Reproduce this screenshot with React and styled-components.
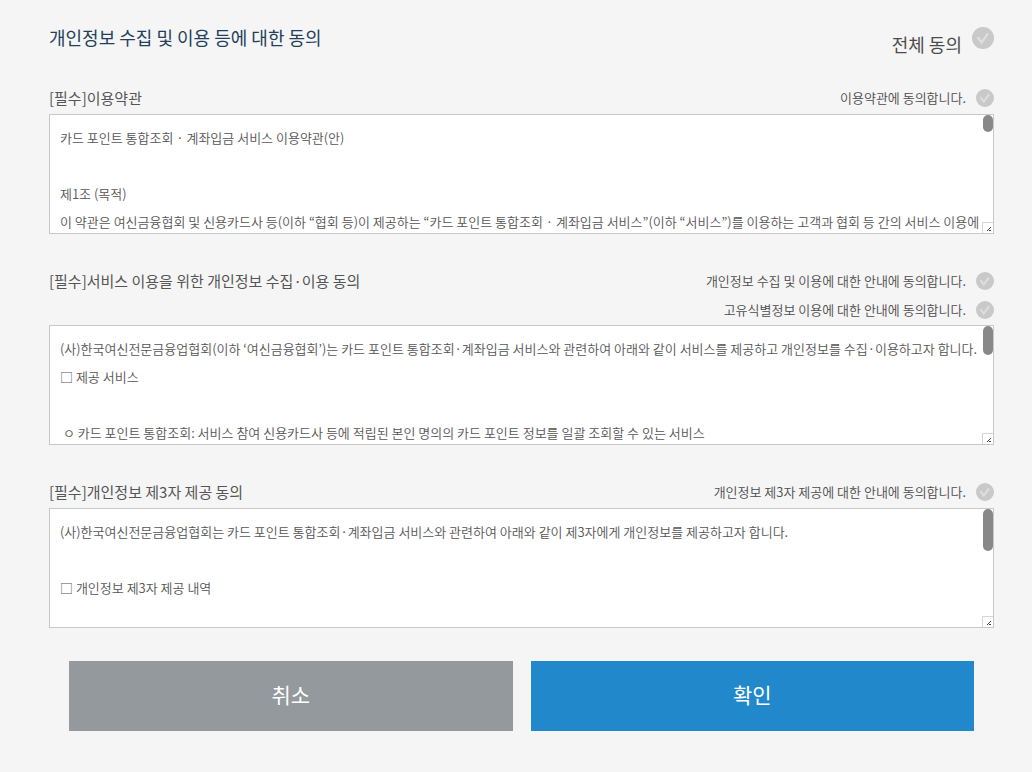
import React, { useState } from "react";
import styled, { createGlobalStyle } from "styled-components";

const GlobalStyle = createGlobalStyle`
  * { box-sizing: border-box; }
  body {
    margin: 0;
    background: #f5f5f5;
    color: #555;
    font-family: "Noto Sans CJK KR", "Noto Sans", sans-serif;
    font-size: 13px;
  }
`;

const Page = styled.form`
  padding: 24px 38px 40px 49px;
`;

const PageHeader = styled.header`
  display: flex;
  justify-content: space-between;
  align-items: flex-start;
  height: 59px;
`;

const Title = styled.h1`
  margin: 0;
  font-size: 18px;
  line-height: 26px;
  font-weight: 400;
  color: #243f5c;
`;

const Section = styled.section`
  margin-bottom: 32px;
`;

const SectionHeader = styled.div`
  display: flex;
  justify-content: space-between;
  align-items: flex-start;
  min-height: 31px;
  padding-bottom: 1px;
`;

const SectionTitle = styled.h2`
  margin: 0;
  font-size: 15px;
  line-height: 29px;
  font-weight: 400;
`;

const Consents = styled.div`
  display: flex;
  flex-direction: column;
  align-items: flex-end;
`;

const ConsentLabel = styled.label`
  display: flex;
  align-items: ${(p) => (p.$large ? "flex-start" : "center")};
  gap: 10px;
  padding-top: ${(p) => (p.$large ? "3px" : "0")};
  font-size: ${(p) => (p.$large ? "18px" : "13px")};
  line-height: ${(p) => (p.$large ? "34px" : "29px")};
  font-weight: ${(p) => (p.$large ? 400 : 350)};
  color: #4c4c4c;
  cursor: pointer;
`;

const CheckWrap = styled.span`
  display: grid;
  width: ${(p) => (p.$large ? "22px" : "18px")};
  height: ${(p) => (p.$large ? "22px" : "18px")};

  > * { grid-area: 1 / 1; }
`;

const CheckInput = styled.input`
  appearance: none;
  width: 100%;
  height: 100%;
  margin: 0;
  border-radius: 50%;
  background: #c9c9c9;
  cursor: pointer;

  &:checked { background: #2188cb; }
`;

const CheckMark = styled.svg`
  width: 100%;
  height: 100%;
  pointer-events: none;
`;

const TermsFrame = styled.div`
  position: relative;
  border: 1px solid #c8c8c8;
  background: #fff;
`;

const TermsText = styled.textarea`
  display: block;
  width: 100%;
  height: 118px;
  margin: 0;
  padding: 9px 10px 0;
  border: 0;
  outline: 0;
  background: transparent;
  color: #555;
  font-family: inherit;
  font-size: 13px;
  font-weight: 350;
  line-height: 28px;
  resize: none;
  scrollbar-width: none;
`;

const ScrollThumb = styled.span`
  position: absolute;
  top: 0;
  right: 0;
  width: 10px;
  height: ${(p) => p.$size}px;
  border-radius: 5px;
  background: #888;
  pointer-events: none;
`;

const Grip = styled.svg`
  position: absolute;
  right: 0;
  bottom: 0;
  width: 11px;
  height: 11px;
  pointer-events: none;
`;

const Actions = styled.div`
  display: grid;
  grid-template-columns: 1fr 1fr;
  gap: 18px;
  padding: 1px 20px 0;
`;

const ActionButton = styled.button`
  height: 70px;
  border: 0;
  padding: 0 0 4px;
  background: ${(p) => (p.$primary ? "#2188cb" : "#94999d")};
  color: #fff;
  font-family: inherit;
  font-size: 21px;
  font-weight: 400;
  cursor: pointer;
`;

function Consent({ children, large }) {
  return (
    <ConsentLabel $large={large}>
      {children}
      <CheckWrap $large={large}>
        <CheckInput type="checkbox" />
        <CheckMark viewBox="0 0 22 22" fill="none" stroke="#dedede" strokeWidth="2.4" aria-hidden="true">
          <path d="M5.5 10 L9.5 15.5 L16 6.5" />
        </CheckMark>
      </CheckWrap>
    </ConsentLabel>
  );
}

const TRACK_HEIGHT = 107;

function Terms({ labelledBy, text, thumb }) {
  const [progress, setProgress] = useState(0);
  const onScroll = (e) => {
    const el = e.currentTarget;
    setProgress(el.scrollTop / Math.max(1, el.scrollHeight - el.clientHeight));
  };
  return (
    <TermsFrame>
      <TermsText aria-labelledby={labelledBy} readOnly value={text} onScroll={onScroll} />
      <ScrollThumb $size={thumb} style={{ top: progress * (TRACK_HEIGHT - thumb) }} />
      <Grip viewBox="0 0 11 11" fill="none" aria-hidden="true">
        <path d="M0 0H11V11H0z" fill="#fff" />
        <path d="M0.5 11 V0.5 H11" stroke="#d4d4d4" />
        <path d="M5 8h1v1h-1z M6 7h1v1h-1z M7 6h1v1h-1z M8 5h1v1h-1z M8 8h1v1h-1z M7 9h1v-1h-1z" fill="#444" />
      </Grip>
    </TermsFrame>
  );
}

const sections = [
  {
    id: "terms",
    title: "[필수]이용약관",
    consents: ["이용약관에 동의합니다."],
    thumb: 17,
    text: `카드 포인트 통합조회 · 계좌입금 서비스 이용약관(안)

제1조 (목적)
이 약관은 여신금융협회 및 신용카드사 등(이하 “협회 등)이 제공하는 “카드 포인트 통합조회 · 계좌입금 서비스”(이하 “서비스”)를 이용하는 고객과 협회 등 간의 서비스 이용에 관한 제반 사항을 정함을 목적으로 합니다.
${"\n".repeat(24)}`,
  },
  {
    id: "privacy",
    title: "[필수]서비스 이용을 위한 개인정보 수집·이용 동의",
    consents: ["개인정보 수집 및 이용에 대한 안내에 동의합니다.", "고유식별정보 이용에 대한 안내에 동의합니다."],
    thumb: 29,
    text: `(사)한국여신전문금융업협회(이하 ‘여신금융협회’)는 카드 포인트 통합조회·계좌입금 서비스와 관련하여 아래와 같이 서비스를 제공하고 개인정보를 수집·이용하고자 합니다.
□ 제공 서비스

 ㅇ 카드 포인트 통합조회: 서비스 참여 신용카드사 등에 적립된 본인 명의의 카드 포인트 정보를 일괄 조회할 수 있는 서비스
${"\n".repeat(10)}`,
  },
  {
    id: "third",
    title: "[필수]개인정보 제3자 제공 동의",
    consents: ["개인정보 제3자 제공에 대한 안내에 동의합니다."],
    thumb: 42,
    text: `(사)한국여신전문금융업협회는 카드 포인트 통합조회·계좌입금 서비스와 관련하여 아래와 같이 제3자에게 개인정보를 제공하고자 합니다.

□ 개인정보 제3자 제공 내역
${"\n".repeat(6)}`,
  },
];

export default function App() {
  return (
    <>
      <GlobalStyle />
      <Page onSubmit={(e) => e.preventDefault()}>
        <PageHeader>
          <Title>개인정보 수집 및 이용 등에 대한 동의</Title>
          <Consent large>전체 동의</Consent>
        </PageHeader>
        {sections.map((s) => (
          <Section key={s.id}>
            <SectionHeader>
              <SectionTitle id={s.id}>{s.title}</SectionTitle>
              <Consents>
                {s.consents.map((c) => (
                  <Consent key={c}>{c}</Consent>
                ))}
              </Consents>
            </SectionHeader>
            <Terms labelledBy={s.id} text={s.text} thumb={s.thumb} />
          </Section>
        ))}
        <Actions>
          <ActionButton type="button">취소</ActionButton>
          <ActionButton type="submit" $primary>확인</ActionButton>
        </Actions>
      </Page>
    </>
  );
}
